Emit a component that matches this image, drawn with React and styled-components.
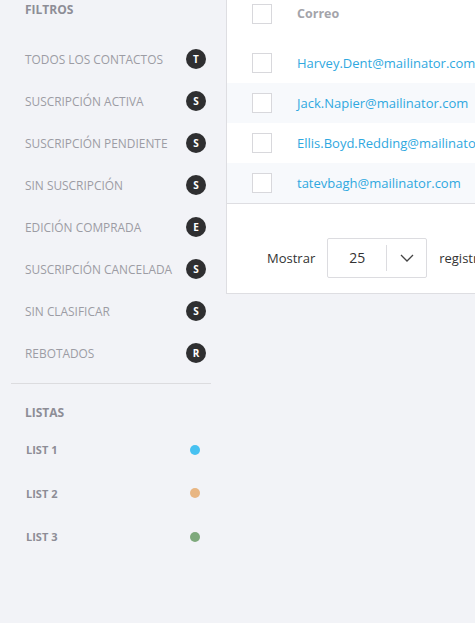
import React from "react";
import styled, { createGlobalStyle } from "styled-components";

const Global = createGlobalStyle`
  html, body { margin: 0; padding: 0; }
  body {
    background: #f2f3f7;
    font-family: "Open Sans", "Liberation Sans", sans-serif;
    width: 475px;
    height: 623px;
    overflow: hidden;
  }
`;

const Page = styled.div`
  display: flex;
  align-items: flex-start;
  width: 475px;
  height: 623px;
  overflow: hidden;
`;

const Sidebar = styled.aside`
  width: 226px;
  flex: none;
  padding: 0 15px 0 11px;
  box-sizing: border-box;
`;

const SectionTitle = styled.div`
  font-size: 12px;
  font-weight: 700;
  color: #8d8d96;
  padding-left: 14px;
  height: ${(p) => p.$h}px;
  line-height: 20px;
  padding-top: ${(p) => p.$top}px;
  box-sizing: content-box;
`;

const FilterList = styled.div`
  display: flex;
  flex-direction: column;
`;

const FilterItem = styled.div`
  display: flex;
  align-items: center;
  justify-content: space-between;
  height: 42px;
  padding-left: 14px;
  padding-right: 5px;
  font-size: 11.9px;
  color: #9c9ca4;
`;

const Badge = styled.span`
  width: 20px;
  height: 20px;
  border-radius: 50%;
  background: #2f2f31;
  color: #fff;
  font-size: 10px;
  font-weight: 700;
  display: flex;
  align-items: center;
  justify-content: center;
`;

const Divider = styled.hr`
  border: 0;
  border-top: 1px solid #dcdcdf;
  margin: 9px 0 0 0;
`;

const ListItem = styled.div`
  display: flex;
  align-items: center;
  justify-content: space-between;
  height: 43.5px;
  padding-left: 15px;
  padding-right: 11px;
  font-size: 11px;
  font-weight: 700;
  color: #8d8d96;
`;

const Dot = styled.span`
  width: 10px;
  height: 10px;
  border-radius: 50%;
  background: ${(p) => p.$color};
`;

const Panel = styled.section`
  flex: 1;
  background: #fff;
  border-left: 1px solid #dedee2;
  border-bottom: 1px solid #dedee2;
  height: 294px;
  box-sizing: border-box;
`;

const Table = styled.div`
  border-bottom: 1px solid #dedee2;
`;

const HeaderRow = styled.div`
  display: flex;
  align-items: center;
  height: 43px;
  padding-bottom: 16px;
  box-sizing: border-box;
`;

const Row = styled.div`
  display: flex;
  align-items: center;
  height: 40px;
  background: ${(p) => (p.$alt ? "#f7f9fc" : "#fff")};
`;

const Check = styled.span`
  width: 18px;
  height: 18px;
  border: 1px solid #d8d8dc;
  margin-left: 25px;
  margin-right: 25px;
  flex: none;
  background: #fff;
`;

const HeadLabel = styled.span`
  font-size: 12.5px;
  font-weight: 700;
  color: #a4a4aa;
`;

const Email = styled.a`
  font-size: 13px;
  color: #2fa8e0;
  text-decoration: none;
  white-space: nowrap;
`;

const Footer = styled.div`
  display: flex;
  align-items: center;
  height: 89px;
  padding-left: 40px;
  padding-top: 18px;
  box-sizing: border-box;
  font-size: 13px;
  color: #333;
  gap: 12px;
  white-space: nowrap;
`;

const Select = styled.div`
  display: flex;
  align-items: center;
  width: 100px;
  height: 40px;
  border: 1px solid #dcdce0;
  border-radius: 2px;
  box-sizing: border-box;
  flex: none;
`;

const SelectValue = styled.span`
  width: 58px;
  text-align: center;
  font-size: 14px;
  color: #333;
`;

const SelectArrow = styled.span`
  flex: 1;
  height: 26px;
  border-left: 1px solid #dcdce0;
  display: flex;
  align-items: center;
  justify-content: center;
`;

const filters = [
  ["TODOS LOS CONTACTOS", "T"],
  ["SUSCRIPCIÓN ACTIVA", "S"],
  ["SUSCRIPCIÓN PENDIENTE", "S"],
  ["SIN SUSCRIPCIÓN", "S"],
  ["EDICIÓN COMPRADA", "E"],
  ["SUSCRIPCIÓN CANCELADA", "S"],
  ["SIN CLASIFICAR", "S"],
  ["REBOTADOS", "R"],
];

const lists = [
  ["LIST 1", "#47c1f1"],
  ["LIST 2", "#e8b683"],
  ["LIST 3", "#7ea97c"],
];

const emails = [
  "Harvey.Dent@mailinator.com",
  "Jack.Napier@mailinator.com",
  "Ellis.Boyd.Redding@mailinator.com",
  "tatevbagh@mailinator.com",
];

export default function App() {
  return (
    <Page>
      <Global />
      <Sidebar>
        <SectionTitle $top={0} $h={38}>FILTROS</SectionTitle>
        <FilterList>
          {filters.map(([label, b]) => (
            <FilterItem key={label}>
              <span>{label}</span>
              <Badge>{b}</Badge>
            </FilterItem>
          ))}
        </FilterList>
        <Divider />
        <SectionTitle $top={19} $h={25}>LISTAS</SectionTitle>
        {lists.map(([label, c]) => (
          <ListItem key={label}>
            <span>{label}</span>
            <Dot $color={c} />
          </ListItem>
        ))}
      </Sidebar>
      <Panel>
        <Table>
          <HeaderRow>
            <Check />
            <HeadLabel>Correo</HeadLabel>
          </HeaderRow>
          {emails.map((e, i) => (
            <Row key={e} $alt={i % 2 === 1}>
              <Check />
              <Email>{e}</Email>
            </Row>
          ))}
        </Table>
        <Footer>
          <span>Mostrar</span>
          <Select>
            <SelectValue>25</SelectValue>
            <SelectArrow>
              <svg width="14" height="8" viewBox="0 0 14 8" fill="none">
                <path d="M1 1l6 6 6-6" stroke="#444" strokeWidth="1.3" />
              </svg>
            </SelectArrow>
          </Select>
          <span>registros</span>
        </Footer>
      </Panel>
    </Page>
  );
}
